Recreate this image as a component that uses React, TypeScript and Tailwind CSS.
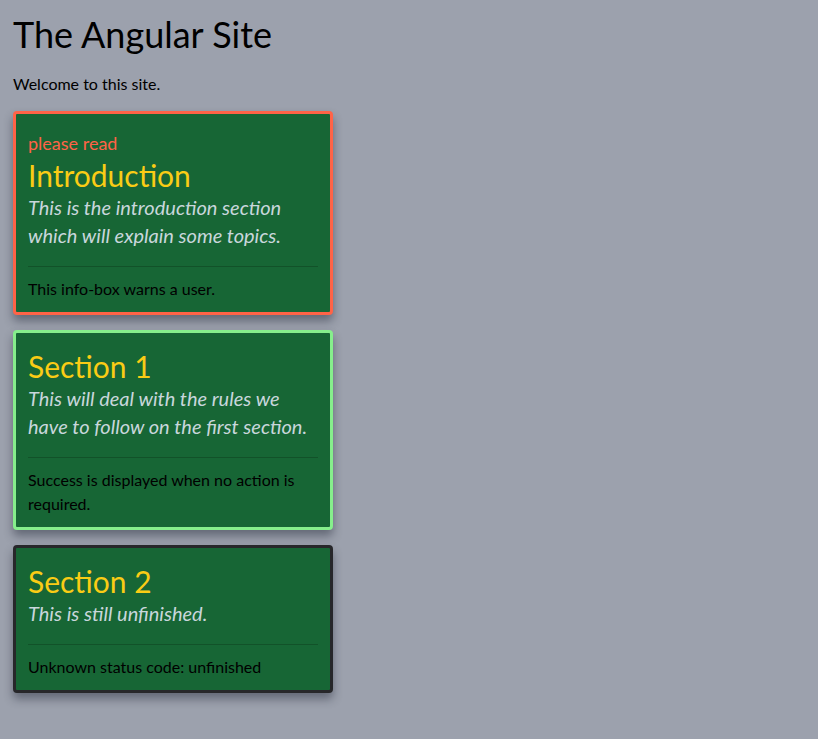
const sections = [
  {
    tag: 'please read',
    title: 'Introduction',
    text: 'This is the introduction section which will explain some topics.',
    note: 'This info-box warns a user.',
    border: 'border-[#ff6347]',
  },
  {
    title: 'Section 1',
    text: 'This will deal with the rules we have to follow on the first section.',
    note: 'Success is displayed when no action is required.',
    border: 'border-[#86ef8c]',
  },
  {
    title: 'Section 2',
    text: 'This is still unfinished.',
    note: 'Unknown status code: unfinished',
    border: 'border-[#27272a]',
  },
]

export default function App() {
  return (
    <div className="min-h-screen bg-[#9ca1ad] px-[13px] pt-[14px] pb-8 font-['Lato','Noto_Sans',sans-serif] text-black">
      <h1 className="text-4xl leading-10">The Angular Site</h1>
      <p className="mt-[18px] mb-[15px] leading-6">Welcome to this site.</p>

      {sections.map((s) => (
        <div
          key={s.title}
          className={`mb-[15px] w-80 rounded border-[3px] ${s.border} bg-[#176635] px-3 pt-[15px] pb-[11px] shadow-[0_6px_10px_rgba(30,35,50,0.45)]`}
        >
          {s.tag && <div className="text-lg leading-7 text-[#ff6347]">{s.tag}</div>}
          <h2 className="text-3xl leading-9 text-[#facc15]">{s.title}</h2>
          <p className="text-xl leading-7 italic text-[#c9d7dc]">{s.text}</p>
          <hr className="mt-[17px] mb-2.5 border-t border-[#125229]" />
          <p className="leading-6">{s.note}</p>
        </div>
      ))}
    </div>
  )
}
